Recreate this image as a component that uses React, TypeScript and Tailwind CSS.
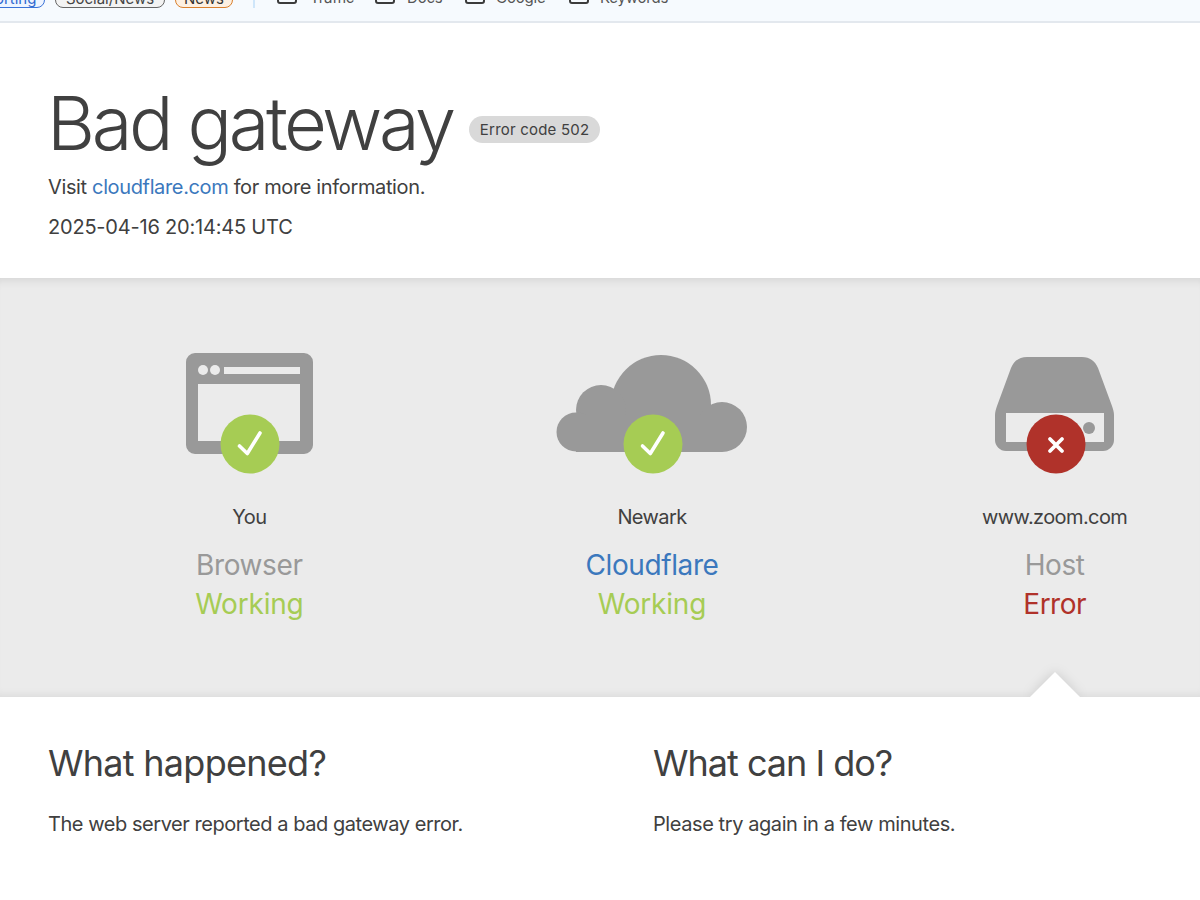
function Badge({ ok }: { ok: boolean }) {
  return (
    <svg className="absolute bottom-[0px] left-1/2 ml-[-29px]" width="60" height="60" viewBox="0 0 60 60" fill="none">
      <circle cx="30" cy="30" r="29.500" fill={ok ? "#a6cc54" : "#b0322a"} />
      {ok ? (
        <path d="M19.500 32 L27.300 39.500 L40 19" stroke="#fff" strokeWidth="3.600" strokeLinecap="round" strokeLinejoin="round" />
      ) : (
        <path d="M24 25 L36 37 M36 25 L24 37" stroke="#fff" strokeWidth="3.800" strokeLinecap="round" />
      )}
    </svg>
  );
}

function BrowserIcon() {
  return (
    <svg width="127" height="101" viewBox="0 0 127 101" fill="#999">
      <path fillRule="evenodd" d="M9 0h109a9 9 0 0 1 9 9v83a9 9 0 0 1-9 9H9a9 9 0 0 1-9-9V9a9 9 0 0 1 9-9zM12 31v57h102V31zM38 14v7h76v-7z" />
      <circle cx="17" cy="17" r="5" fill="#ebebeb" />
      <circle cx="29" cy="17" r="5" fill="#ebebeb" />
    </svg>
  );
}

function CloudIcon() {
  return (
    <svg className="mt-[2px]" width="191" height="97" viewBox="0 0 191 97" fill="#999">
      <circle cx="105" cy="50" r="50" />
      <circle cx="45" cy="55" r="25" />
      <circle cx="20" cy="77" r="19.500" />
      <circle cx="166" cy="72" r="25" />
      <rect x="20" y="60" width="146" height="37" />
    </svg>
  );
}

function ServerIcon() {
  return (
    <svg className="mt-[4px]" width="119" height="94" viewBox="0 0 119 94" fill="#999">
      <path fillRule="evenodd" d="M32 0h55c8 0 13 4 16 11l14 38c1 3 2 6 2 9v25c0 6-5 11-11 11H11C5 94 0 89 0 83V58c0-3 1-6 2-9l14-38C19 4 24 0 32 0zM11 56v29h98V56z" />
      <circle cx="94" cy="71" r="6" />
    </svg>
  );
}

function Column({ icon, ok, place, title, titleClass, status, statusClass }: { icon: React.ReactNode; ok: boolean; place: string; title: string; titleClass: string; status: string; statusClass: string }) {
  return (
    <div className="flex flex-col items-center">
      <div className="relative flex h-[121px] w-full items-start justify-center">
        {icon}
        <Badge ok={ok} />
      </div>
      <div className="mt-[31px] text-[20px] leading-[24px] tracking-[-0.6px] text-[#404040]">{place}</div>
      <div className={`mt-[17px] text-[28px] leading-[39px] tracking-[-0.4px] ${titleClass}`}>{title}</div>
      <div className={`text-[28px] leading-[39px] ${statusClass}`}>{status}</div>
    </div>
  );
}

function Pill({ text, cls }: { text: string; cls: string }) {
  return (
    <div className={`flex h-[32px] shrink-0 items-end justify-center rounded-[8px] border-[1.500px] text-[15px] leading-[17px] ${cls}`}>
      {text}
    </div>
  );
}

function Check({ label, cls }: { label: string; cls: string }) {
  return (
    <div className={`flex items-end ${cls}`}>
      <div className="h-[24px] w-[20px] shrink-0 rounded-[3px] border-2 border-[#3c3c3c]" />
      <span className="mb-[-3px] text-[15px] leading-[18px] tracking-[-0.2px] text-[#555]">{label}</span>
    </div>
  );
}

export default function App() {
  return (
    <div className="h-[900px] w-[1200px] overflow-hidden bg-white font-['Inter','Liberation_Sans',sans-serif]">
      <div className="flex h-[23px] items-end overflow-hidden border-b-2 border-[#e3e8ee] bg-[#f6fafe] pb-[13px]">
        <div className="ml-[-41px] flex items-end gap-[10px]">
          <Pill text="Reporting" cls="w-[86px] border-[#3b73d8] bg-[#eef4ff] text-[#2f68d0]" />
          <Pill text="Social/News" cls="w-[110px] border-[#666] bg-[#f3f3f3] text-[#444]" />
          <Pill text="News" cls="w-[58px] border-[#d9802e] bg-[#fdf0e2] text-[#333]" />
        </div>
        <div className="ml-[20px] h-[20px] w-[2px] bg-[#cfe6fa]" />
        <div className="mb-[4px] ml-[22px] flex items-end">
          <Check label="Traffic" cls="w-[98px] gap-[13px]" />
          <Check label="Docs" cls="w-[90px] gap-[12px]" />
          <Check label="Google" cls="w-[104px] gap-[11px]" />
          <Check label="Keywords" cls="w-[110px] gap-[11px]" />
        </div>
      </div>

      <div className="flex h-[255px] flex-col pl-[47px] pt-[58px]">
        <div className="flex items-center">
          <h1 className="text-[74px] font-light leading-[84px] tracking-[-3.400px] text-[#404040]">Bad gateway</h1>
          <span className="ml-[16px] mt-[13px] rounded-full bg-[#d9d9d9] px-[11px] py-[3px] text-[15px] leading-[21px] tracking-[0.2px] text-[#404040]">Error code 502</span>
        </div>
        <p className="ml-[1px] mt-[7px] text-[20px] leading-[30px] tracking-[-0.36px] text-[#404040]">
          Visit <span className="text-[#3b78bd]">cloudflare.com</span> for more information.
        </p>
        <p className="ml-[1px] mt-[10px] text-[20px] leading-[30px] tracking-[-0.2px] text-[#404040]">2025-04-16 20:14:45 UTC</p>
      </div>

      <div className="relative h-[419px] overflow-hidden bg-[#ebebeb] shadow-[inset_0_10px_10px_-8px_rgba(0,0,0,0.10),inset_0_-8px_8px_-6px_rgba(0,0,0,0.07)]">
        <div className="ml-[48px] grid w-[1208px] grid-cols-3 pt-[75px]">
          <Column icon={<BrowserIcon />} ok place="You" title="Browser" titleClass="text-[#999]" status="Working" statusClass="tracking-[-0.2px] text-[#a6cc54]" />
          <Column icon={<CloudIcon />} ok place="Newark" title="Cloudflare" titleClass="text-[#3b78bd]" status="Working" statusClass="tracking-[-0.2px] text-[#a6cc54]" />
          <Column icon={<ServerIcon />} ok={false} place="www.zoom.com" title="Host" titleClass="text-[#999]" status="Error" statusClass="tracking-[-0.5px] text-[#b0322a]" />
        </div>
        <svg className="absolute bottom-0 left-[1030px] overflow-visible drop-shadow-[0_0_6px_rgba(0,0,0,0.14)]" width="50" height="25" viewBox="0 0 50 25" fill="#fff">
          <path d="M0 25 L25 0 L50 25 Z" />
        </svg>
      </div>

      <div className="flex pl-[48px] pt-[42px]">
        <div className="w-[605px]">
          <h2 className="text-[36px] leading-[48px] tracking-[-0.72px] text-[#404040]">What happened?</h2>
          <p className="mt-[22px] text-[20px] leading-[30px] tracking-[-0.45px] text-[#404040]">The web server reported a bad gateway error.</p>
        </div>
        <div>
          <h2 className="text-[36px] leading-[48px] tracking-[-1px] text-[#404040]">What can I do?</h2>
          <p className="mt-[22px] text-[20px] leading-[30px] tracking-[-0.42px] text-[#404040]">Please try again in a few minutes.</p>
        </div>
      </div>
    </div>
  );
}
